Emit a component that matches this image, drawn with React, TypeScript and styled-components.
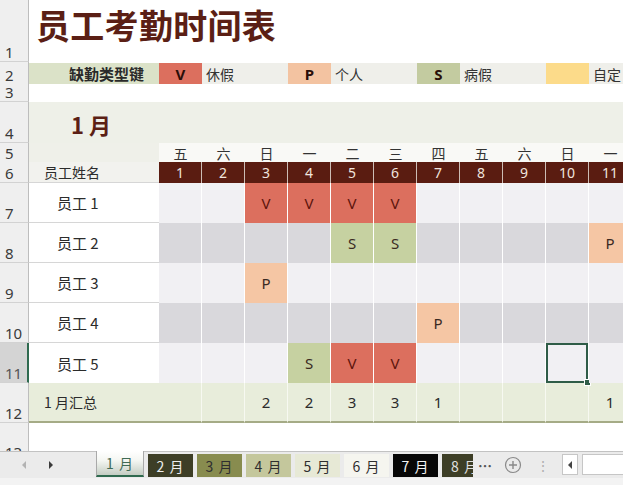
import React from "react";
import styled, { createGlobalStyle, css } from "styled-components";

const GlobalStyle = createGlobalStyle`
  html, body {
    margin: 0;
    padding: 0;
    background: #ffffff;
  }
  body {
    font-family: "Noto Sans CJK SC", "Noto Sans", sans-serif;
    color: #2b2b2b;
  }
`;

type Code = "V" | "P" | "S" | "";

const COLS = "29px 130px repeat(11, 43px)";

const codeBg: Record<string, string> = {
  V: "#dc6f5e",
  P: "#f5c6a4",
  S: "#c6d1a1",
};

const days = ["五", "六", "日", "一", "二", "三", "四", "五", "六", "日", "一"];

const employees: { name: string; marks: Code[] }[] = [
  { name: "员工 1", marks: ["", "", "V", "V", "V", "V", "", "", "", "", ""] },
  { name: "员工 2", marks: ["", "", "", "", "S", "S", "", "", "", "", "P"] },
  { name: "员工 3", marks: ["", "", "P", "", "", "", "", "", "", "", ""] },
  { name: "员工 4", marks: ["", "", "", "", "", "", "P", "", "", "", ""] },
  { name: "员工 5", marks: ["", "", "", "S", "V", "V", "", "", "", "", ""] },
];

const totals = ["", "", "2", "2", "3", "3", "1", "", "", "", "1"];

const legend = [
  { code: "V", label: "休假", bg: "#dc6f5e", span: 2 },
  { code: "P", label: "个人", bg: "#f3c3a1", span: 2 },
  { code: "S", label: "病假", bg: "#c3cba0", span: 2 },
  { code: "", label: "自定", bg: "#fcdb8a", span: 1 },
];

const tabs = [
  { label: "1 月", bg: "", fg: "#3f6a55", active: true },
  { label: "2 月", bg: "#3d3e26", fg: "#eeeeee" },
  { label: "3 月", bg: "#888c4f", fg: "#2f2f2f" },
  { label: "4 月", bg: "#c4c79c", fg: "#2f2f2f" },
  { label: "5 月", bg: "#e7e9d6", fg: "#2f2f2f" },
  { label: "6 月", bg: "#f5f5ef", fg: "#2f2f2f" },
  { label: "7 月", bg: "#070707", fg: "#f4f4f4" },
  { label: "8 月", bg: "#3d3e26", fg: "#e0e0e0", narrow: true },
];

export default function App() {
  return (
    <Page>
      <GlobalStyle />
      <Sheet>
        <Row $h={62}>
          <RowHead>1</RowHead>
          <Title>员工考勤时间表</Title>
        </Row>

        <Row $h={22}>
          <RowHead>2</RowHead>
          <LegendKey>缺勤类型键</LegendKey>
          {legend.map((item) => (
            <React.Fragment key={item.label}>
              <LegendCode $bg={item.bg}>{item.code}</LegendCode>
              <LegendLabel $span={item.span}>{item.label}</LegendLabel>
            </React.Fragment>
          ))}
        </Row>

        <Row $h={18}>
          <RowHead>3</RowHead>
        </Row>

        <Row $h={41}>
          <RowHead>4</RowHead>
          <MonthBand>1 月</MonthBand>
        </Row>

        <Row $h={19}>
          <RowHead>5</RowHead>
          <NameCell $bg="#eff0e9" />
          {days.map((d, i) => (
            <DayCell key={i}>{d}</DayCell>
          ))}
        </Row>

        <Row $h={21}>
          <RowHead>6</RowHead>
          <NameCell $bg="#f2f2ee" $indent={15} $line>
            员工姓名
          </NameCell>
          {days.map((_, i) => (
            <DateHead key={i}>{i + 1}</DateHead>
          ))}
        </Row>

        {employees.map((emp, r) => (
          <Row $h={40} key={emp.name}>
            <RowHead $selected={r === 4}>{r + 7}</RowHead>
            <NameCell $indent={28} $line={r < 4} $size={15}>
              {emp.name}
            </NameCell>
            {emp.marks.map((m, c) => (
              <MarkCell
                key={c}
                $bg={m ? codeBg[m] : r % 2 === 0 ? "#f1f0f3" : "#d9d8dc"}
                $code={m}
                $selected={r === 4 && c === 9}
              >
                {m}
              </MarkCell>
            ))}
          </Row>
        ))}

        <Row $h={40}>
          <RowHead>12</RowHead>
          <TotalName>1 月汇总</TotalName>
          {totals.map((t, i) => (
            <TotalCell key={i}>{t}</TotalCell>
          ))}
        </Row>

        <Row $h={29}>
          <RowHead $clipped>13</RowHead>
        </Row>
      </Sheet>

      <TabBar>
        <TabNav>
          <Arrow $dir="left" />
          <Arrow $dir="right" />
        </TabNav>
        <TabList>
          {tabs.map((t) => (
            <Tab
              key={t.label}
              $bg={t.bg}
              $fg={t.fg}
              $active={!!t.active}
              $narrow={!!t.narrow}
            >
              {t.label}
            </Tab>
          ))}
        </TabList>
        <Ellipsis>…</Ellipsis>
        <AddSheet>
          <svg width="18" height="18" viewBox="0 0 18 18">
            <circle cx="9" cy="9" r="7.5" fill="none" stroke="#8a8a8a" strokeWidth="1.2" />
            <path d="M9 5v8M5 9h8" stroke="#8a8a8a" strokeWidth="1.4" />
          </svg>
        </AddSheet>
        <Splitter>⋮</Splitter>
        <ScrollButton>
          <Arrow $dir="left" $dark />
        </ScrollButton>
        <ScrollTrack />
      </TabBar>
      <StatusStrip />
    </Page>
  );
}

const Page = styled.div`
  width: 623px;
  height: 485px;
  overflow: hidden;
  background: #ffffff;
  display: flex;
  flex-direction: column;
`;

const Sheet = styled.div`
  display: flex;
  flex-direction: column;
  width: 632px;
`;

const Row = styled.div<{ $h: number }>`
  display: grid;
  grid-template-columns: ${COLS};
  height: ${({ $h }) => $h}px;
`;

const RowHead = styled.div<{ $selected?: boolean; $clipped?: boolean }>`
  grid-column: 1;
  box-sizing: border-box;
  background: ${({ $selected }) => ($selected ? "#d4d4d4" : "#efefef")};
  border-right: ${({ $selected }) =>
    $selected ? "2px solid #2f6a4f" : "1px solid #bdbdbd"};
  border-bottom: 1px solid #d2d2d2;
  display: flex;
  align-items: flex-end;
  padding: 0 0 1px 5px;
  font-family: "Noto Sans", "Liberation Sans", sans-serif;
  font-size: 15px;
  line-height: 15px;
  color: ${({ $selected }) => ($selected ? "#555" : "#3a3a3a")};
  overflow: hidden;

  ${({ $clipped }) =>
    $clipped &&
    css`
      align-items: flex-start;
      padding-top: 22px;
      border-bottom: none;
    `}
`;

const Title = styled.div`
  grid-column: 2 / -1;
  padding: 7px 0 0 7px;
  font-size: 34px;
  line-height: 36px;
  font-weight: 700;
  letter-spacing: 0.3px;
  color: #5b1f15;
  white-space: nowrap;
`;

const LegendKey = styled.div`
  background: #dbe2c8;
  display: flex;
  align-items: center;
  justify-content: flex-end;
  padding-right: 15px;
  font-size: 15px;
  font-weight: 700;
  color: #2a2a2a;
  margin: 1px 0;
`;

const LegendCode = styled.div<{ $bg: string }>`
  background: ${({ $bg }) => $bg};
  display: flex;
  align-items: center;
  justify-content: center;
  font-family: "Noto Sans", "Liberation Sans", sans-serif;
  font-size: 15px;
  font-weight: 700;
  color: #2a0e08;
  margin: 1px 0;
`;

const LegendLabel = styled.div<{ $span: number }>`
  grid-column: span ${({ $span }) => $span};
  background: #efefea;
  display: flex;
  align-items: center;
  padding-left: 4px;
  font-size: 14px;
  color: #333;
  margin: 1px 0;
  white-space: nowrap;
`;

const MonthBand = styled.div`
  grid-column: 2 / -1;
  background: #eef0e8;
  display: flex;
  align-items: center;
  padding: 2px 0 0 42px;
  font-size: 22px;
  font-weight: 700;
  color: #5b1f15;
  white-space: nowrap;
`;

const NameCell = styled.div<{
  $bg?: string;
  $indent?: number;
  $line?: boolean;
  $size?: number;
}>`
  box-sizing: border-box;
  background: ${({ $bg }) => $bg || "#ffffff"};
  display: flex;
  align-items: center;
  padding-left: ${({ $indent }) => $indent || 0}px;
  font-size: ${({ $size }) => $size || 14}px;
  color: #2b2b2b;
  border-bottom: ${({ $line }) => ($line ? "1px solid #d6d6d6" : "none")};
  white-space: nowrap;
`;

const DayCell = styled.div`
  background: #f9f9f6;
  display: flex;
  align-items: center;
  justify-content: center;
  font-size: 14px;
  color: #333;
`;

const DateHead = styled.div`
  box-sizing: border-box;
  background: #5a1c11;
  border-right: 1px solid #cdbcb5;
  display: flex;
  align-items: center;
  justify-content: center;
  font-family: "Noto Sans", "Liberation Sans", sans-serif;
  font-size: 14px;
  color: #f1e4de;
`;

const MarkCell = styled.div<{ $bg: string; $code: Code; $selected: boolean }>`
  position: relative;
  box-sizing: border-box;
  background: ${({ $bg }) => $bg};
  border-right: 1px solid #ffffff;
  display: flex;
  align-items: center;
  justify-content: center;
  font-family: "Noto Sans", "Liberation Sans", sans-serif;
  font-size: 15px;
  color: ${({ $code }) => ($code === "V" ? "#5e140c" : "#3a2a22")};

  ${({ $selected }) =>
    $selected &&
    css`
      box-shadow: inset 0 0 0 2px #2f5c47;
      &::after {
        content: "";
        position: absolute;
        right: -3px;
        bottom: -3px;
        width: 5px;
        height: 5px;
        background: #2f5c47;
        border: 1px solid #ffffff;
      }
    `}
`;

const TotalName = styled.div`
  background: #e8eddb;
  border-bottom: 2px solid #a5ab86;
  display: flex;
  align-items: center;
  padding-left: 15px;
  font-size: 14px;
  color: #2b2b2b;
  white-space: nowrap;
`;

const TotalCell = styled.div`
  box-sizing: border-box;
  background: #e8eddb;
  border-right: 1px solid #f7f9f1;
  border-bottom: 2px solid #a5ab86;
  display: flex;
  align-items: center;
  justify-content: center;
  font-family: "Noto Sans", "Liberation Sans", sans-serif;
  font-size: 15px;
  color: #2b2b2b;
`;

const TabBar = styled.div`
  position: relative;
  z-index: 1;
  margin-top: -1px;
  height: 27px;
  box-sizing: border-box;
  display: flex;
  align-items: stretch;
  background: #ebebeb;
  border-top: 1px solid #c2c2c2;
`;

const TabNav = styled.div`
  width: 96px;
  flex-shrink: 0;
  display: flex;
  align-items: center;
  gap: 23px;
  padding-left: 22px;
  box-sizing: border-box;
`;

const Arrow = styled.span<{ $dir: "left" | "right"; $dark?: boolean }>`
  display: block;
  width: 0;
  height: 0;
  border-top: 4px solid transparent;
  border-bottom: 4px solid transparent;
  ${({ $dir, $dark }) =>
    $dir === "left"
      ? css`
          border-right: 4px solid ${$dark ? "#444" : "#b3b3b3"};
        `
      : css`
          border-left: 4px solid #3a3a3a;
        `}
`;

const TabList = styled.div`
  display: flex;
  gap: 4px;
  align-items: flex-start;
`;

const Tab = styled.div<{
  $bg: string;
  $fg: string;
  $active: boolean;
  $narrow: boolean;
}>`
  width: ${({ $narrow, $active }) => ($narrow ? 31 : $active ? 48 : 45)}px;
  height: 23px;
  margin-top: 2px;
  box-sizing: border-box;
  display: flex;
  align-items: center;
  justify-content: ${({ $narrow }) => ($narrow ? "flex-start" : "center")};
  padding-left: ${({ $narrow }) => ($narrow ? 9 : 0)}px;
  overflow: hidden;
  white-space: nowrap;
  background: ${({ $bg }) => $bg};
  color: ${({ $fg }) => $fg};
  font-size: 14px;
  letter-spacing: 1px;

  ${({ $active }) =>
    $active &&
    css`
      height: 26px;
      margin-top: -1px;
      background: linear-gradient(#ffffff, #f4f6f2 40%, #c4cdc3);
      border-left: 1px solid #a9a9a9;
      border-right: 1px solid #a9a9a9;
      border-bottom: 2px solid #2f6a4f;
    `}
`;

const Ellipsis = styled.div`
  margin-left: 5px;
  display: flex;
  align-items: center;
  font-size: 14px;
  color: #555;
  font-weight: 700;
`;

const AddSheet = styled.div`
  margin-left: 12px;
  display: flex;
  align-items: center;
`;

const Splitter = styled.div`
  margin-left: 14px;
  display: flex;
  align-items: center;
  color: #b0b0b0;
  font-size: 14px;
`;

const ScrollButton = styled.div`
  margin-left: 12px;
  margin-top: 2px;
  width: 16px;
  height: 21px;
  box-sizing: border-box;
  background: #ffffff;
  border: 1px solid #c6c6c6;
  display: flex;
  align-items: center;
  justify-content: center;
`;

const ScrollTrack = styled.div`
  margin-left: 4px;
  margin-top: 2px;
  flex: 1;
  height: 21px;
  box-sizing: border-box;
  background: #ffffff;
  border: 1px solid #c6c6c6;
  border-right: none;
`;

const StatusStrip = styled.div`
  flex: 1;
  background: #f3f3f3;
`;
